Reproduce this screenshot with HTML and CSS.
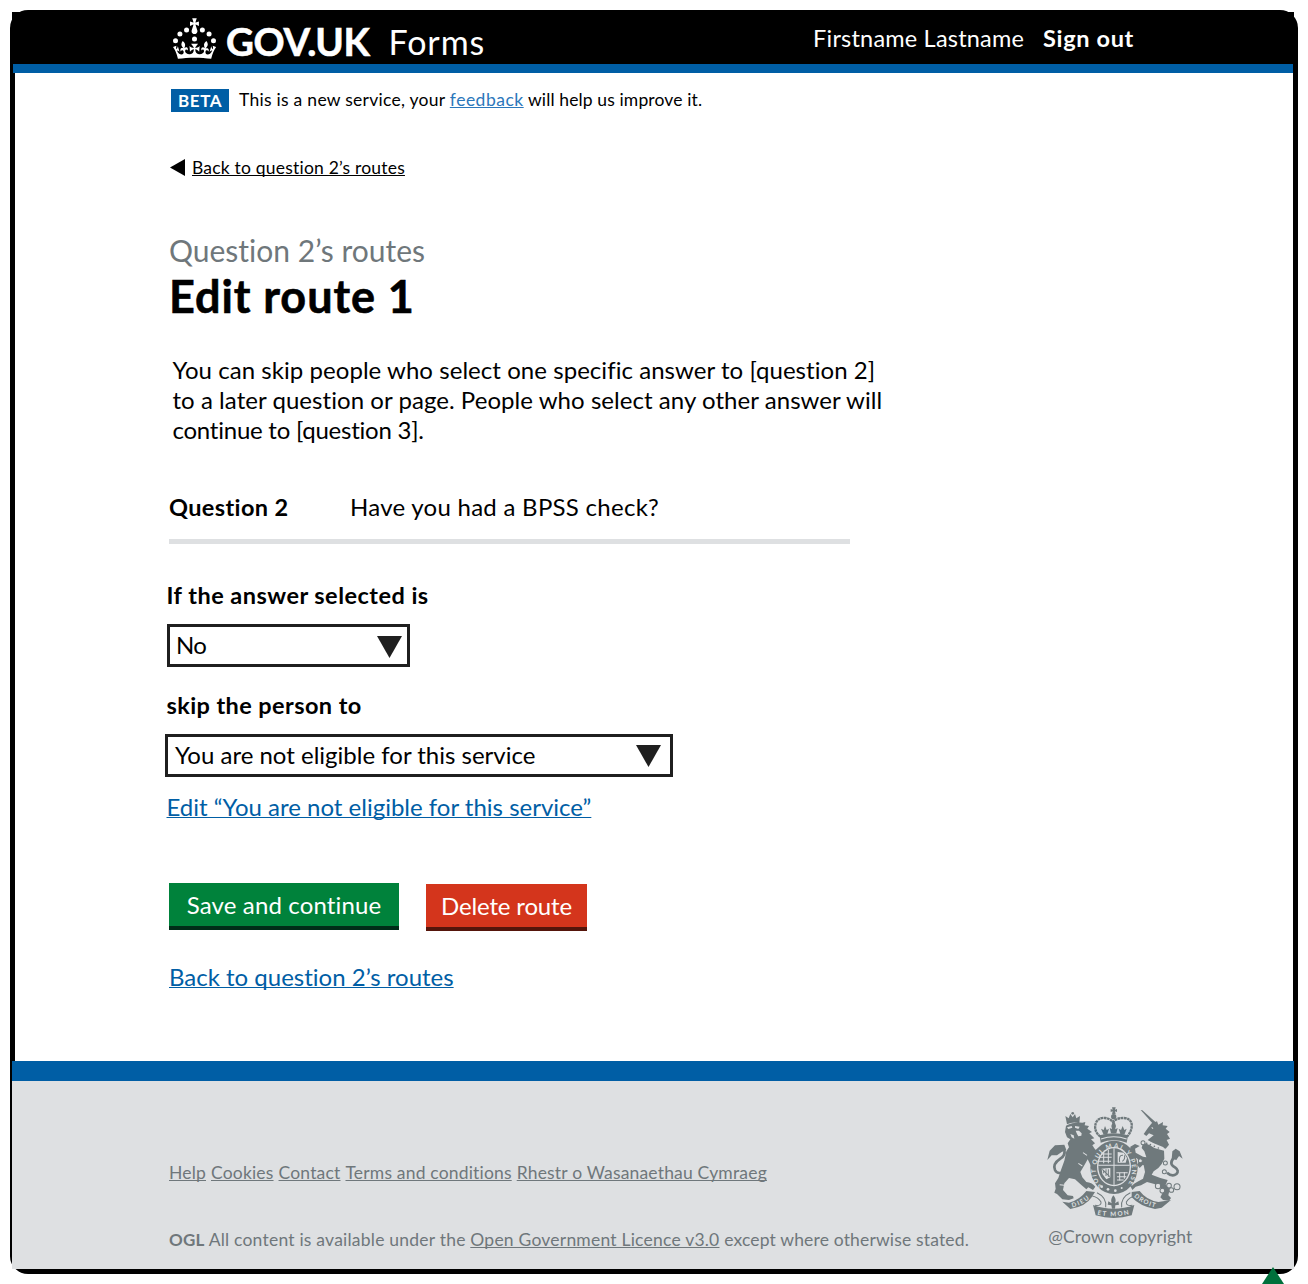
FILE: index.html
```html
<!DOCTYPE html>
<html lang="en">
<head>
<meta charset="utf-8">
<title>Edit route 1 – GOV.UK Forms</title>
<link rel="stylesheet" href="styles.css">
</head>
<body>
<div class="frame">
  <header class="header">
    <div class="brand">
      <svg class="brand-crown" viewBox="0 0 63.4 60" aria-hidden="true">
        <circle cx="20" cy="17.6" r="3.7"/><circle cx="10.2" cy="23.5" r="3.7"/><circle cx="3.7" cy="33.2" r="3.7"/>
        <circle cx="31.7" cy="30.6" r="3.7"/><circle cx="43.3" cy="17.6" r="3.7"/><circle cx="53.2" cy="23.5" r="3.7"/><circle cx="59.7" cy="33.2" r="3.7"/>
        <path d="M33.1,9.8c.2-.1.3-.3.5-.5l4.6,2.4v-6.8l-4.6,1.5c-.1-.2-.3-.3-.5-.5l1.9-5.9h-6.7l1.9,5.9c-.2.1-.3.3-.5.5l-4.6-1.5v6.8l4.6-2.4c.1.2.3.3.5.5l-2.6,8c-.9,2.8,1.2,5.7,4.1,5.7h0c3,0,5.1-2.9,4.1-5.7l-2.6-8ZM37,37.9s-3.4,3.8-4.1,6.1c2.2,0,4.2-.5,6.4-2.8l-.7,8.5c-2-2.8-4.4-4.1-5.7-3.8.1,3.1.5,6.7,5.8,7.2,3.7.3,6.7-1.5,7-3.8.4-2.6-2-4.3-3.7-1.6-1.4-4.5,2.4-6.1,4.9-3.2-1.9-4.5-1.8-7.7,2.4-10.9,3,4,2.6,7.3-1.2,11.1,2.4-1.3,6.2,0,4,4.6-1.2-2.8-3.7-2.2-4.2.2-.3,1.7.7,3.7,3,4.2,1.9.3,4.7-.9,7-5.9-1.3,0-2.4.7-3.9,1.7l2.4-8c.6,2.3,1.4,3.7,2.2,4.5.6-1.6.5-2.8,0-5.3l5,1.8c-2.6,3.6-5.2,8.7-7.3,17.5-7.4-1.1-15.7-1.7-24.5-1.7h0c-8.8,0-17.1.6-24.5,1.7-2.1-8.9-4.7-13.9-7.3-17.5l5-1.8c-.5,2.5-.6,3.7,0,5.3.8-.8,1.6-2.3,2.2-4.5l2.4,8c-1.5-1-2.6-1.7-3.9-1.7,2.3,5,5.2,6.2,7,5.9,2.3-.4,3.3-2.4,3-4.2-.5-2.4-3-3.1-4.2-.2-2.2-4.6,1.6-6,4-4.6-3.7-3.7-4.2-7.1-1.2-11.1,4.2,3.2,4.3,6.4,2.4,10.9,2.5-2.8,6.3-1.3,4.9,3.2-1.8-2.7-4.1-1-3.7,1.6.3,2.3,3.3,4.1,7,3.8,5.4-.5,5.7-4.2,5.8-7.2-1.3-.2-3.7,1-5.7,3.8l-.7-8.5c2.2,2.3,4.2,2.7,6.4,2.8-.7-2.3-4.1-6.1-4.1-6.1h10.6Z"/>
      </svg>
      <span class="brand-name">GOV.UK</span>
      <span class="brand-product">Forms</span>
    </div>
    <nav class="account">
      <span class="account-name">Firstname Lastname</span>
      <a class="account-out">Sign out</a>
    </nav>
  </header>

  <main class="main">
    <div class="phase">
      <strong class="tag">BETA</strong>
      <p class="phase-text"><span class="phase-a">This is a new service, your </span><a class="phase-link">feedback</a><span class="phase-b"> will help us improve it.</span></p>
    </div>

    <div class="back">
      <svg class="back-arrow" viewBox="0 0 15 17"><path d="M0 8.5 15 0v17z"/></svg>
      <a class="back-link">Back to question 2’s routes</a>
    </div>

    <p class="caption">Question 2’s routes</p>
    <h1 class="title">Edit route 1</h1>

    <p class="intro">You can skip people who select one specific answer to [question 2]<br>to a later question or page. People who select any other answer will<br><span class="intro-last">continue to [question 3].</span></p>

    <dl class="summary">
      <dt>Question 2</dt>
      <dd>Have you had a BPSS check?</dd>
    </dl>

    <p class="label label-if">If the answer selected is</p>
    <div class="select select-short">
      <span class="select-no">No</span>
      <svg class="select-arrow" viewBox="0 0 25 22"><path d="M0 0h25L12.5 22z"/></svg>
    </div>

    <p class="label label-skip">skip the person to</p>
    <div class="select select-long">
      <span>You are not eligible for this service</span>
      <svg class="select-arrow" viewBox="0 0 25 22"><path d="M0 0h25L12.5 22z"/></svg>
    </div>
    <a class="link link-edit">Edit “You are not eligible for this service”</a>

    <div class="actions">
      <button class="button button-save">Save and continue</button>
      <button class="button button-delete">Delete route</button>
    </div>
    <a class="link link-routes">Back to question 2’s routes</a>
  </main>

  <footer class="footer">
    <div class="footer-meta">
      <nav class="footer-nav">
        <a>Help</a><a>Cookies</a><a>Contact</a><a>Terms and conditions</a><a>Rhestr o Wasanaethau Cymraeg</a>
      </nav>
      <p class="licence"><strong>OGL</strong> All content is available under the <a>Open Government Licence v3.0</a> <span>except where otherwise stated.</span></p>
    </div>
    <div class="footer-crest">
      <svg class="crest" viewBox="52 48 410 338" role="img" aria-label="Royal coat of arms">
        <defs>
          <path id="garter" d="M216 289 A54 67 0 1 1 290 289"/>
          <path id="dieu" d="M128 352 Q160 345 184 322"/>
          <path id="mon" d="M203 374 Q252 384 301 372"/>
          <path id="droit" d="M312 320 Q342 345 380 353"/>
        </defs>
        <!-- lion -->
        <g class="ink">
          <path d="M112 103 107 78 117 85 122 72 129 82 136 72 140 85 151 78 149 100 Q130 94 112 103Z"/>
          <circle cx="129" cy="70" r="4"/>
          <path d="M106 126 109 107 Q130 96 158 98 L167 96 165 106 178 108 173 116 187 126 179 130 194 145 184 148 196 160 188 166 200 184 205 190 190 240 174 208 164 226 152 246 158 262 170 276 Q186 277 197 290 L190 300 176 292 170 298 156 286 136 268 118 264 104 280 100 300 114 316 130 318 132 325 118 330 98 328 82 312 74 308 78 296 76 280 86 264 94 240 104 212 110 184 118 172 114 160 122 148 112 142Z"/>
          <path d="M180 190 200 178 214 184 202 208 188 214Z"/>
          <path d="M188 238 205 236 204 252 214 270 218 298 206 292 196 270 188 262Z"/>
          <path d="M53 210 60 182 76 166 104 164 110 180 96 186 82 196 66 196Z"/>
        </g>
        <path class="cord" d="M104 180 Q108 196 92 206 Q68 222 76 240 Q82 252 96 248"/>
        <path class="paper" d="M112 112 126 108 128 113 116 117ZM136 108 150 110 146 117 136 113ZM138 122 148 122 156 130 155 137 146 139 142 132ZM122 132 132 136 134 146 126 142Z"/>
        <path class="scratch" d="M158 228 146 220M104 286 90 284M172 196 160 188"/>
        <!-- unicorn -->
        <g class="ink">
          <path d="M333 60 338 61 378 97 371 103Z"/>
          <path d="M342 132 354 115 366 100 382 94 386 104 400 96 399 106 414 108 408 116 420 126 412 132 421 146 411 150 418 164 408 176 380 166 354 150 372 136 358 130 350 138Z"/>
          <path d="M340 158 352 160 374 174 403 182 404 206 396 222 386 234 372 244 366 254 392 264 414 270 408 284 420 298 416 316 424 324 418 332 400 330 392 322 400 306 390 290 374 282 352 276 334 286 318 290 308 300 302 288 322 276 340 266 346 246 342 226 330 220 326 206 310 200 302 186 302 170 316 162 330 168 316 176 318 188 340 200 350 202 344 184 336 174Z"/>
          <path d="M316 196 340 206 342 222 330 234 322 224 328 214Z"/>
          <path d="M426 206 428 184 438 176 450 184 459 206 448 198 440 210Z"/>
        </g>
        <path class="cord" d="M432 204 Q416 222 436 232 Q450 242 440 252 Q428 262 412 248"/>
        <path class="paper" d="M348 150 402 172 400 180 346 160Z"/>
        <path class="scratch" d="M366 112 370 116"/>
        <path class="chain" d="M351 160h.1M362 164h.1M374 169h.1M386 174h.1"/>
        <g class="ring">
          <circle cx="340" cy="158" r="6"/><circle cx="332" cy="212" r="6"/><circle cx="407" cy="219" r="6"/><circle cx="404" cy="245" r="6"/>
          <circle cx="385" cy="288" r="8"/><circle cx="398" cy="302" r="7"/><circle cx="418" cy="287" r="7"/><circle cx="425" cy="300" r="7"/><circle cx="442" cy="290" r="9"/>
        </g>
        <!-- garter and shield -->
        <ellipse class="ink" cx="253" cy="232" rx="71" ry="80"/>
        <ellipse class="paper" cx="253" cy="230" rx="51" ry="59"/>
        <ellipse class="ink" cx="253" cy="230" rx="47" ry="55"/>
        <path class="scratch" d="M253 175v110M206 226h94M214 192h32M210 202h36M208 214h36M260 248h34M262 260h28M262 270h20M222 186v34M236 180v40M270 248v24M284 246v20"/>
        <path class="paper" d="M264 186 282 188 292 204 288 218 264 218ZM216 236 242 234 242 262 230 268 218 252Z"/>
        <path class="line" d="M270 216Q266 194 280 196M278 214Q288 206 284 196M222 240v10M229 238v20M236 238v22M218 238 240 260"/>
        <g class="motto">
          <text textLength="286" lengthAdjust="spacing"><textPath href="#garter">SOIT QUI MAL Y PENSE</textPath></text>
        </g>
        <g class="paper"><circle cx="216" cy="290" r="4"/><circle cx="235" cy="298" r="4"/><circle cx="257" cy="302" r="4"/><circle cx="276" cy="294" r="3"/></g>
        <!-- crown -->
        <path class="band" d="M212 140Q190 122 199 98 Q206 82 226 84 Q242 86 250 96 Q260 84 280 84 Q302 84 306 102 Q308 122 292 140"/>
        <g class="ink">
          <path d="M210 136Q252 124 295 136L291 158Q252 144 213 158Z"/>
          <path d="M247 52h11l-2 7 6-2v9l-6-2 2 9h-11l2-9-6 2v-9l6 2Z"/>
          <circle cx="252" cy="80" r="8"/>
          <path d="M252 88 259 108 254 126 249 126 245 108Z"/>
          <path d="M222 134 214 116 222 120 226 108 231 120 238 116 233 132ZM272 132 267 116 274 120 279 108 284 120 291 116 284 134ZM244 130 240 114 248 118 252 106 257 118 264 114 260 130Z"/>
        </g>
        <path class="scratch" d="M214 147Q252 133 291 147"/>
        <!-- ribbon -->
        <g class="ink">
          <path d="M98 335 118 338Q150 330 170 303L196 306 186 322Q168 350 122 357Z"/>
          <path d="M190 345Q252 368 314 345L306 376Q252 392 198 376Z"/>
          <path d="M306 306 330 303Q350 330 386 336L424 330 396 353 376 357Q332 350 306 322Z"/>
        </g>
        <path class="line" d="M188 318Q206 322 214 336Q216 348 196 346M202 308Q232 322 228 352M316 318Q298 322 290 336Q288 348 308 346M302 308Q272 322 276 352"/>
        <path class="ink" d="M251 316Q262 328 256 340L266 334 268 344 257 346 256 356H247L245 346 234 344 236 334 246 340Q241 328 251 316Z"/>
        <g class="motto motto-ribbon">
          <text textLength="58"><textPath href="#dieu">DIEU</textPath></text>
          <text textLength="96"><textPath href="#mon">ET MON</textPath></text>
          <text textLength="72"><textPath href="#droit">DROIT</textPath></text>
        </g>
      </svg>
      <p class="copyright">@Crown copyright</p>
    </div>
  </footer>
</div>
<svg class="marker" viewBox="0 0 22 17"><path d="M11 0 22 17H0z"/></svg>
</body>
</html>
```

FILE: styles.css
```css
* { box-sizing: border-box; }

body {
  position: relative;
  width: 1308px;
  height: 1284px;
  margin: 0;
  overflow: hidden;
  background: #fff;
  color: #000;
  font-family: "Proxima Nova", Lato, sans-serif;
  font-size: 24px;
  font-variant-ligatures: none;
}

p, h1, dl, dd { margin: 0; }
a { text-decoration: underline; text-decoration-thickness: 1px; text-decoration-skip-ink: none; }

.frame {
  width: 1287.5px;
  height: 1263.5px;
  margin: 10px;
  padding: 2px 3.5px 5px 2px;
  float: left;
  background: #000;
  border-radius: 18px;
}

/* Header */
.header {
  display: flex;
  justify-content: space-between;
  height: 52px;
  padding: 0 160px 0 161px;
  background: #000;
  color: #fff;
}
.brand { display: flex; }
.brand-crown { width: 43px; height: 41px; margin-top: 6px; fill: #fff; }
.brand-name {
  margin-left: 10px;
  font-size: 38.5px;
  font-weight: 700;
  line-height: 40px;
  letter-spacing: -0.35px;
  padding-top: 9px;
  -webkit-text-stroke: 0.6px #fff;
}
.brand-product {
  margin-left: 19px;
  font-size: 34px;
  line-height: 40px;
  letter-spacing: 0.9px;
  padding-top: 10px;
}
.account { display: flex; padding-top: 11px; font-size: 23.5px; line-height: 30px; }
.account-name { letter-spacing: 0.2px; }
.account-out { margin-left: 19px; font-weight: 700; letter-spacing: 0.65px; text-decoration: none; }

/* Main */
.main {
  height: 997px;
  margin: 0 1px;
  padding-top: 16px;
  border-top: 9px solid #005ea5;
  background: #fff;
  background-clip: padding-box;
  box-shadow: inset 2px 0 #000;
  padding-left: 153px;
}
.phase { display: flex; margin-left: 5px; }
.tag {
  width: 58px;
  height: 23px;
  padding-left: 7px;
  background: #005ea5;
  color: #fff;
  font-size: 17px;
  line-height: 23px;
  letter-spacing: 0.6px;
}
.phase-text { margin-left: 10px; font-size: 17.5px; line-height: 22px; white-space: pre; }
.phase-a { letter-spacing: 0.27px; }
.phase-link { color: #2b77bb; letter-spacing: 0.5px; }
.phase-b { letter-spacing: 0.13px; }

.back { display: flex; margin: 45px 0 0 4px; font-size: 17.5px; line-height: 22px; }
.back-arrow { width: 15px; height: 17px; margin-top: 2px; }
.back-link { margin-left: 7px; letter-spacing: 0.2px; }

.caption { margin: 53px 0 0 3px; color: #6f777b; font-size: 30px; line-height: 36px; letter-spacing: 0; }
.title { margin: 3px 0 0 3px; font-size: 45px; line-height: 50px; letter-spacing: 0.92px; -webkit-text-stroke: 0.6px #000; }
.intro { margin: 34px 0 0 6.5px; line-height: 30px; letter-spacing: 0.05px; }
.intro-last { letter-spacing: -0.24px; }

.summary {
  display: grid;
  grid-template-columns: 181px 1fr;
  width: 681px;
  margin: 47px 0 0 3px;
  padding-bottom: 17px;
  border-bottom: 5px solid #dee0e2;
  line-height: 30px;
  letter-spacing: 0.27px;
}
.summary dt { font-size: 23.5px; font-weight: 700; letter-spacing: 0.38px; }

.label { font-size: 23.5px; font-weight: 700; line-height: 30px; margin-left: 0.5px; }
.label-if { margin-top: 36px; letter-spacing: 0.47px; }
.label-skip { margin-top: 23px; letter-spacing: 0.41px; }

.select {
  display: flex;
  justify-content: space-between;
  height: 43px;
  border: 3px solid #1f1f1f;
  line-height: 36px;
}
.select-short { width: 243px; margin: 14px 0 0 1px; padding: 0 5px 0 6px; }
.select-long { width: 508px; margin: 14px 0 0 -1px; padding: 0 9px 0 7px; }
.select-no { letter-spacing: -0.6px; }
.select-arrow { width: 25px; height: 22px; margin-top: 9px; fill: #1f1f1f; }
.select-long .select-arrow { margin-top: 8px; }

.link { display: block; width: max-content; color: #005ea5; line-height: 30px; }
.link-edit { margin: 15px 0 0 0.5px; }
.link-routes { margin: 31px 0 0 3px; }

.actions { display: flex; gap: 27px; margin: 61px 0 0 3px; }
.button {
  display: flex;
  justify-content: center;
  height: 47px;
  padding: 0;
  border: 0;
  color: #fff;
  font: inherit;
  line-height: 43px;
}
.button-save { width: 230px; background: #00823b; box-shadow: inset 0 -4px #002d18; letter-spacing: 0.14px; }
.button-delete { width: 161px; margin-top: 1px; background: #d4351c; box-shadow: inset 0 -4px #55150b; letter-spacing: -0.16px; }
.button-save { padding-bottom: 4px; }
.button-delete { padding-bottom: 6px; }

/* Footer */
.footer {
  display: flex;
  justify-content: space-between;
  height: 207.5px;
  padding: 0 93px 0 157px;
  border-top: 20px solid #005ea5;
  background: #dee0e2;
  color: #6f777b;
  font-size: 17.5px;
  line-height: 20px;
}
.footer-meta { padding-top: 82px; }
.footer-nav { display: flex; gap: 5px; letter-spacing: 0.18px; }
.licence { margin-top: 47px; letter-spacing: 0.22px; }
.licence strong { font-size: 17px; letter-spacing: 0.2px; }
.licence span { letter-spacing: 0.16px; }
.footer-crest { width: 154px; padding: 25px 0 0 0.3px; }
.crest { display: block; width: 136.7px; height: 112.7px; }
.copyright { margin: 8.5px 0 0 1px; letter-spacing: 0.1px; white-space: nowrap; }

.ink { fill: #6f797c; }
.paper { fill: #dee0e2; }
.cord { fill: none; stroke: #6f797c; stroke-width: 8; }
.band { fill: none; stroke: #6f797c; stroke-width: 7; stroke-dasharray: 8 1.5; }
.line { fill: none; stroke: #6f797c; stroke-width: 3; }
.ring { fill: #dee0e2; stroke: #6f797c; stroke-width: 3; }
.scratch { fill: none; stroke: #dee0e2; stroke-width: 3; }
.chain { fill: none; stroke: #6f797c; stroke-width: 5; stroke-linecap: round; }
.motto { fill: #dee0e2; font-size: 19px; font-weight: 700; }

.marker { position: absolute; left: 1262px; top: 1267px; width: 22px; height: 17px; fill: #00703c; }
```
